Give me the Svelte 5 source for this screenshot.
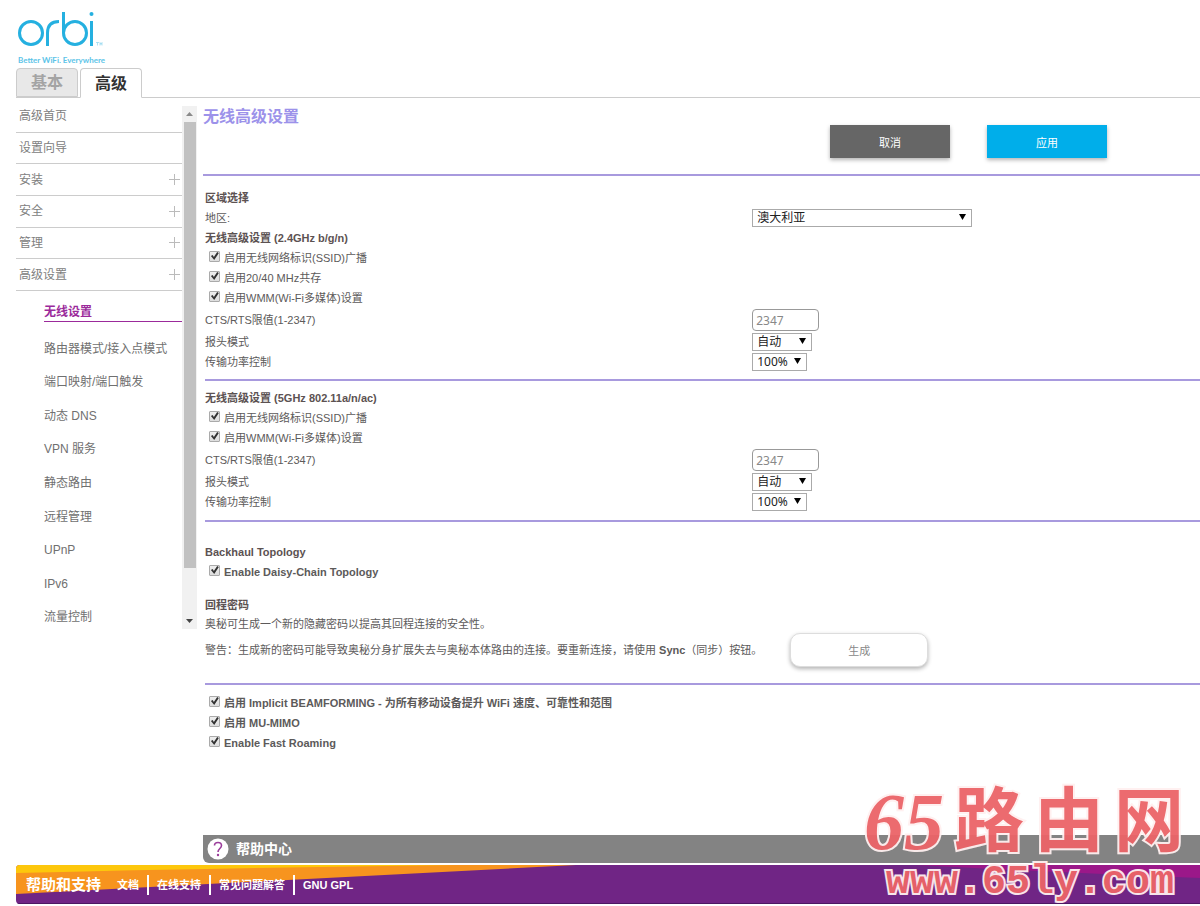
<script lang="ts">
  type Item = { label: string; sub?: boolean };

  const menu: Item[] = [
    { label: '高级首页' },
    { label: '设置向导' },
    { label: '安装', sub: true },
    { label: '安全', sub: true },
    { label: '管理', sub: true },
    { label: '高级设置', sub: true },
  ];

  const submenu = [
    '路由器模式/接入点模式',
    '端口映射/端口触发',
    '动态 DNS',
    'VPN 服务',
    '静态路由',
    '远程管理',
    'UPnP',
    'IPv6',
    '流量控制',
  ];

  const bands = $state([
    {
      id: 'b24',
      title: '无线高级设置 (2.4GHz b/g/n)',
      options: [
        { label: '启用无线网络标识(SSID)广播', on: true },
        { label: '启用20/40 MHz共存', on: true },
        { label: '启用WMM(Wi-Fi多媒体)设置', on: true },
      ],
      cts: '2347',
    },
    {
      id: 'b5',
      title: '无线高级设置 (5GHz 802.11a/n/ac)',
      options: [
        { label: '启用无线网络标识(SSID)广播', on: true },
        { label: '启用WMM(Wi-Fi多媒体)设置', on: true },
      ],
      cts: '2347',
    },
  ]);

  const extras = $state([
    { label: '启用 Implicit BEAMFORMING - 为所有移动设备提升 WiFi 速度、可靠性和范围', on: true },
    { label: '启用 MU-MIMO', on: true },
    { label: 'Enable Fast Roaming', on: true },
  ]);

  let daisyChain = $state(true);

  const links = ['文档', '在线支持', '常见问题解答', 'GNU GPL'];
</script>

{#snippet dropdown(id: string, value: string, size: string)}
  <span class="dropdown {size}">
    <select {id}><option>{value}</option></select>
    <svg width="7" height="6" viewBox="0 0 7 6"><path d="M0 0h7L3.5 6z" /></svg>
  </span>
{/snippet}

<div class="page">
  <header>
    <svg class="logo" width="90" height="40" viewBox="0 0 90 40" role="img" aria-label="orbi">
      <g fill="none" stroke="#25b0e0" stroke-width="3">
        <circle cx="15" cy="23" r="11.5" />
        <path d="M31.500 36V23Q31.500 11.500 43 11.500" />
        <path d="M47.500 2V23" />
        <circle cx="59" cy="23" r="11.500" />
        <path d="M75.500 11V36" />
      </g>
      <circle cx="75.500" cy="4" r="2" fill="#25b0e0" />
      <path d="M80 32.500h3M81.500 32.500v3M84 35.500v-3l1 2 1-2v3" fill="none" stroke="#8fd6ee" stroke-width=".7" />
    </svg>
    <span class="tagline">Better WiFi. Everywhere</span>
  </header>

  <nav class="tabs">
    <button class="tab">基本</button>
    <button class="tab active">高级</button>
  </nav>

  <div class="content">
    <aside>
      <nav class="side">
        <ul class="menu">
          {#each menu as item}
            <li>
              <a href="#menu">{item.label}</a>
              {#if item.sub}
                <svg width="11" height="11" viewBox="0 0 11 11"><path d="M5.500 0v11M0 5.500h11" /></svg>
              {/if}
            </li>
          {/each}
        </ul>
        <a class="current" href="#wireless">无线设置</a>
        <ul class="submenu">
          {#each submenu as label}
            <li><a href="#sub">{label}</a></li>
          {/each}
        </ul>
      </nav>
      <div class="scrollbar">
        <svg width="7" height="4" viewBox="0 0 7 4"><path d="M0 4L3.500 0 7 4z" fill="#8a8a8a" /></svg>
        <div class="thumb"></div>
        <svg width="7" height="4" viewBox="0 0 7 4"><path d="M0 0h7L3.500 4z" fill="#444" /></svg>
      </div>
    </aside>

    <main>
      <div class="top">
        <h1>无线高级设置</h1>
        <div class="actions">
          <button class="action cancel">取消</button>
          <button class="action apply">应用</button>
        </div>
      </div>

      <form>
        <section class="region">
          <h2>区域选择</h2>
          <div class="row">
            <label for="region">地区:</label>
            {@render dropdown('region', '澳大利亚', 'wide')}
          </div>
        </section>

        {#each bands as band}
          <section class="band">
            <h2>{band.title}</h2>
            {#each band.options as option}
              <label class="check"><input type="checkbox" bind:checked={option.on} />{option.label}</label>
            {/each}
            <div class="row tall">
              <label for="{band.id}-cts">CTS/RTS限值(1-2347)</label>
              <input id="{band.id}-cts" class="number" type="text" bind:value={band.cts} />
            </div>
            <div class="row">
              <label for="{band.id}-preamble">报头模式</label>
              {@render dropdown(band.id + '-preamble', '自动', 'medium')}
            </div>
            <div class="row">
              <label for="{band.id}-power">传输功率控制</label>
              {@render dropdown(band.id + '-power', '100%', 'small')}
            </div>
          </section>
        {/each}

        <section class="backhaul">
          <h2>Backhaul Topology</h2>
          <label class="check strong"><input type="checkbox" bind:checked={daisyChain} />Enable Daisy-Chain Topology</label>
          <h2 class="password">回程密码</h2>
          <p>奥秘可生成一个新的隐藏密码以提高其回程连接的安全性。</p>
          <div class="warning">
            <p>警告：生成新的密码可能导致奥秘分身扩展失去与奥秘本体路由的连接。要重新连接，请使用 <b>Sync</b>（同步）按钮。</p>
            <button type="button" class="generate">生成</button>
          </div>
        </section>

        <section class="extras">
          {#each extras as option}
            <label class="check strong"><input type="checkbox" bind:checked={option.on} />{option.label}</label>
          {/each}
        </section>
      </form>

      <a class="help" href="#help">
        <svg width="22" height="22" viewBox="0 0 22 22">
          <circle cx="11" cy="11" r="10.500" fill="#fff" />
          <path d="M7.500 7.500C7.500 3.500 14.500 3.500 14.500 7.500C14.500 10.500 11 10.500 11 14" fill="none" stroke="#9b3d9b" stroke-width="1.600" />
          <circle cx="11" cy="17" r="1.200" fill="#9b3d9b" />
        </svg>
        帮助中心
      </a>
    </main>
  </div>

  <footer>
    <svg class="swoosh" viewBox="0 0 1184 39" preserveAspectRatio="none">
      <path d="M0 0H1184V39H0z" fill="#702585" />
      <path d="M0 0H560L0 29z" fill="#f7941e" />
      <path d="M0 0H440Q200 3 0 8z" fill="#fdc70c" />
      <path d="M900 0H1184V13Q1050 8 900 0z" fill="#9b1889" />
      <path d="M0 38H1184V39H0z" fill="#4c1763" />
    </svg>
    <strong>帮助和支持</strong>
    <ul>
      {#each links as link}
        <li><a href="#support">{link}</a></li>
      {/each}
    </ul>
  </footer>

  <div class="watermark">
    <div class="name"><i>65</i><span>路</span><span>由</span><span>网</span></div>
    <div class="url">www.65ly.com</div>
  </div>
</div>

<style>
  :global(body) {
    margin: 0;
    background: #fff;
  }
  .page {
    position: relative;
    padding: 0 0 2px 16px;
    font: 11px/20px "Liberation Sans", "Noto Sans CJK SC", sans-serif;
    color: #5c5a5a;
    overflow: hidden;
  }
  .page * {
    box-sizing: border-box;
  }
  a {
    color: inherit;
    text-decoration: none;
  }
  ul {
    list-style: none;
    margin: 0;
    padding: 0;
  }
  button, select, input {
    font-family: inherit;
    margin: 0;
  }

  header {
    display: flex;
    flex-direction: column;
    padding: 10px 0 2px;
  }
  .logo {
    display: block;
  }
  .tagline {
    padding: 4px 0 0 2px;
    font: bold 8px/12px Lato, sans-serif;
    color: #5cc4e8;
  }

  .tabs {
    display: flex;
    gap: 2px;
    border-bottom: 1px solid #ccc;
  }
  .tab {
    width: 62px;
    height: 29px;
    padding: 0;
    margin-bottom: -1px;
    border: 1px solid #ccc;
    border-radius: 4px 4px 0 0;
    background: #e8e8e8;
    color: #a4a4a4;
    font-size: 16px;
    font-weight: bold;
    line-height: 27px;
  }
  .tab.active {
    height: 30px;
    border-bottom-color: #fff;
    background: #fff;
    color: #333;
  }

  .content {
    display: flex;
    gap: 6px;
  }
  aside {
    display: flex;
    flex: none;
    width: 181px;
    align-items: flex-start;
    font-size: 12px;
    color: #808080;
  }
  .side {
    flex: 1;
    padding-top: 3px;
  }
  .menu {
    display: grid;
    grid-auto-rows: 1fr;
    height: 190px;
  }
  .menu li {
    display: flex;
    align-items: center;
    justify-content: space-between;
    padding: 0 2px 0 3px;
    border-bottom: 1px solid #ccc;
  }
  .menu path {
    stroke: #bbb;
    stroke-width: 1;
  }
  .current {
    display: block;
    margin: 12px 0 0 28px;
    border-bottom: 1px solid #9b2a9b;
    color: #9b2a9b;
    font-weight: bold;
    line-height: 18px;
  }
  .submenu {
    display: grid;
    grid-auto-rows: 1fr;
    height: 302px;
    margin: 10px 0 0 28px;
  }
  .submenu li {
    display: flex;
    align-items: center;
    white-space: nowrap;
    color: #707070;
  }
  .scrollbar {
    display: flex;
    flex-direction: column;
    align-items: center;
    width: 15px;
    height: 523px;
    margin-top: 8px;
    padding: 6px 0;
    background: #f1f1f1;
  }
  .thumb {
    width: 12px;
    height: 446px;
    margin: 6px 0 auto;
    background: #c1c1c1;
  }

  main {
    flex: 1;
    min-width: 0;
  }
  .top {
    display: flex;
    justify-content: space-between;
    height: 78px;
    padding-top: 9px;
    border-bottom: 2px solid #a89ade;
  }
  h1 {
    margin: 0;
    font-size: 16px;
    line-height: 20px;
    color: #9c92ea;
  }
  .actions {
    display: flex;
    gap: 37px;
    padding: 18px 93px 0 0;
  }
  .action {
    width: 120px;
    height: 33px;
    border: 0;
    color: #fff;
    font-size: 11px;
    box-shadow: 0 2px 4px rgba(0, 0, 0, .3);
  }
  .cancel {
    background: #666;
  }
  .apply {
    background: #00aeea;
  }

  form {
    padding-left: 2px;
  }
  h2 {
    margin: 0;
    font-size: 11px;
    line-height: 20px;
    color: #5c5252;
  }
  p {
    margin: 0;
  }
  section {
    border-bottom: 2px solid #a89ade;
    padding: 7px 0 8px;
  }
  .region {
    padding: 12px 0 0;
    border: 0;
  }
  .band:nth-child(2) {
    padding: 0 0 7px;
  }
  .row {
    display: grid;
    grid-template-columns: 55% 1fr;
    align-items: center;
    height: 20px;
  }
  .row.tall {
    height: 24px;
  }
  .check {
    display: flex;
    align-items: center;
    width: fit-content;
    gap: 4px;
    padding-left: 4px;
  }
  .check.strong {
    font-weight: bold;
  }
  .check input {
    position: relative;
    appearance: none;
    width: 11px;
    height: 11px;
    margin-bottom: 4px;
    border: 1px solid #aaa;
    border-radius: 1px;
    background: linear-gradient(#eee, #ddd);
  }
  .check input:checked::after {
    content: "";
    position: absolute;
    inset: 0;
    background: #333;
    clip-path: polygon(10% 50%, 30% 38%, 43% 60%, 80% 5%, 98% 18%, 47% 95%);
  }
  .number {
    width: 67px;
    height: 22px;
    padding: 0 3px;
    border: 1px solid #999;
    border-radius: 4px;
    color: #888;
    font: 12px "Noto Sans", sans-serif;
  }
  .dropdown {
    position: relative;
    height: 18px;
  }
  .dropdown select {
    display: block;
    appearance: none;
    width: 100%;
    height: 18px;
    padding: 0 4px;
    border: 1px solid #aaa;
    border-radius: 0;
    background: #fff;
    color: #222;
    font: 12px/16px "Noto Sans", "Noto Sans CJK SC", sans-serif;
  }
  .dropdown svg {
    position: absolute;
    top: 5px;
    right: 6px;
    pointer-events: none;
  }
  .wide {
    width: 220px;
  }
  .medium {
    width: 60px;
  }
  .small {
    width: 55px;
  }

  .backhaul {
    padding: 20px 0 16px;
  }
  .password {
    margin-top: 13px;
  }
  .backhaul > p {
    line-height: 18px;
  }
  .warning {
    display: flex;
    align-items: center;
    gap: 28px;
  }
  .generate {
    width: 138px;
    height: 34px;
    border: 1px solid #ddd;
    border-radius: 10px;
    background: #fff;
    color: #888;
    font-size: 11px;
    box-shadow: 0 2px 4px rgba(0, 0, 0, .3);
  }
  .extras {
    border: 0;
    padding: 8px 0 82px;
  }

  .help {
    display: flex;
    align-items: center;
    gap: 7px;
    height: 28px;
    padding-left: 4px;
    border-radius: 0 0 0 6px;
    background: #838383;
    color: #fff;
    font-size: 14px;
    font-weight: bold;
  }

  footer {
    position: relative;
    display: flex;
    align-items: center;
    height: 39px;
    margin-top: 2px;
    padding-left: 10px;
    border-radius: 4px 0 0 4px;
    overflow: hidden;
    color: #fff;
  }
  .swoosh {
    position: absolute;
    inset: 0;
    width: 100%;
    height: 100%;
  }
  footer strong {
    position: relative;
    font-size: 15px;
  }
  footer ul {
    position: relative;
    display: flex;
    padding-left: 8px;
  }
  footer li {
    padding: 0 8px;
    font-weight: bold;
  }
  footer li + li {
    border-left: 2px solid #fff;
  }

  .watermark {
    position: absolute;
    right: 16px;
    bottom: 0;
    color: #ec6468;
    font-weight: bold;
    -webkit-text-stroke: 4px #fff0f0;
    paint-order: stroke fill;
    pointer-events: none;
    opacity: .95;
  }
  .name {
    display: flex;
    justify-content: flex-end;
    gap: 10px;
    font-size: 70px;
    line-height: 76px;
  }
  .name i {
    font-family: "Liberation Serif", serif;
    font-size: 80px;
  }
  .url {
    padding-right: 10px;
    font: bold 40px/46px "Liberation Mono", monospace;
    text-align: right;
  }
</style>
